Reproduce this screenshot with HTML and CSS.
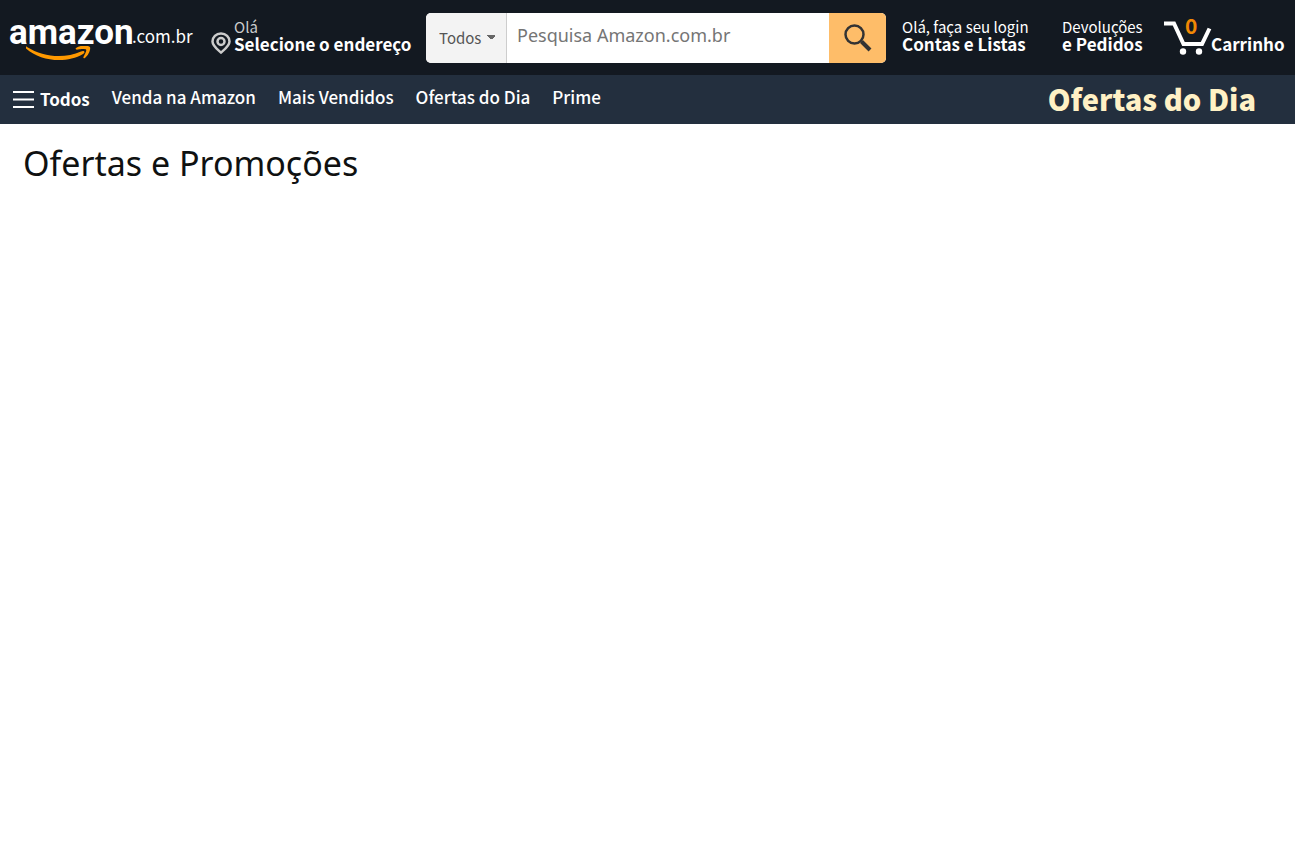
FILE: index.html
```html
<!DOCTYPE html>
<html lang="pt-BR">
<head>
<meta charset="utf-8">
<meta name="viewport" content="width=device-width, initial-scale=1">
<title>Ofertas e Promoções</title>
<link rel="stylesheet" href="styles.css">
</head>
<body>
<header>
  <div class="belt">
    <a class="logo" href="#">
      <span class="wordmark">amazon<svg class="smile" viewBox="0 0 66 16" aria-hidden="true"><path d="M1 1C17 11 38 13 55 5.500C58 4 60 6 57 8C41 17.500 15 16 0 2.500C-1 1 0 0 1 1Z"/><path d="M50 2C54-1 62-1 64 1C65 4 62 10 59 12C57 13 57 11 58 10C59 8 61 4.500 60 3.500C59 2.500 54 3 52 3.500C50 4 49 3 50 2Z"/></svg></span>
      <span class="domain">.com.br</span>
    </a>
    <a class="location" href="#">
      <svg class="pin" viewBox="0 0 20 22" aria-hidden="true"><path d="M10 1.500C5 1.500 1.500 5 1.500 9.500C1.500 14 6.500 17.500 10 20.500C13.500 17.500 18.500 14 18.500 9.500C18.500 5 15 1.500 10 1.500Z"/><circle cx="10" cy="9.500" r="3.500"/></svg>
      <span class="two-line"><span class="line-one muted">Olá</span><strong>Selecione o endereço</strong></span>
    </a>
    <form class="search">
      <select class="scope" aria-label="Departamento"><option>Todos</option></select>
      <input class="query" type="text" placeholder="Pesquisa Amazon.com.br" aria-label="Pesquisa Amazon.com.br">
      <button class="go" type="button" aria-label="Ir"><svg viewBox="0 0 28 28" aria-hidden="true"><circle cx="10.500" cy="10.500" r="9"/><path class="handle" d="M17.500 17.500L26 26"/></svg></button>
    </form>
    <a class="two-line account" href="#"><span class="line-one">Olá, faça seu login</span><strong>Contas e Listas</strong></a>
    <a class="two-line orders" href="#"><span class="line-one">Devoluções</span><strong>e Pedidos</strong></a>
    <a class="cart" href="#">
      <span class="cart-icon"><svg viewBox="0 0 48 36" aria-hidden="true"><path d="M0 4.500H10L19.500 25H38L45.500 9.500"/><circle cx="19" cy="32.500" r="3.200"/><circle cx="35" cy="32.500" r="3.200"/></svg><span class="count">0</span></span>
      <strong>Carrinho</strong>
    </a>
  </div>
  <nav class="main-nav" aria-label="Principal">
    <button class="all" type="button"><svg viewBox="0 0 21 17" aria-hidden="true"><path d="M0 1H21M0 8.500H21M0 16H21"/></svg><span>Todos</span></button>
    <a href="#">Venda na Amazon</a>
    <a href="#">Mais Vendidos</a>
    <a href="#">Ofertas do Dia</a>
    <a href="#">Prime</a>
    <a class="promo" href="#">Ofertas do Dia</a>
  </nav>
</header>
<main>
  <h1>Ofertas e Promoções</h1>
</main>
</body>
</html>
```
FILE: styles.css
```css
* { box-sizing: border-box; }
body {
  margin: 0;
  background: #fff;
  color: #0f1111;
  font-family: "Noto Sans CJK JP", "Noto Sans", sans-serif;
}
a { color: #fff; text-decoration: none; white-space: nowrap; }
svg { display: block; fill: none; }
strong { font-weight: 700; }
button, input, select { font-family: inherit; }

.belt {
  display: flex;
  align-items: center;
  height: 75px;
  padding: 0 13px 0 9px;
  background: #131921;
}
.logo { display: flex; align-items: center; width: 202px; }
.wordmark {
  position: relative;
  width: 123px;
  padding-bottom: 10px;
  font: 700 35px/40px Roboto, sans-serif;
}
.smile {
  position: absolute;
  left: 17px;
  top: 33px;
  width: 66px;
  height: 16px;
  fill: #ff9900;
}
.domain { padding-bottom: 4px; font-size: 17px; line-height: 20px; }
.location { display: flex; align-items: center; gap: 3px; width: 215px; }
.pin { width: 20px; height: 22px; margin-top: 10px; stroke: #ccc; stroke-width: 2.5; }
.two-line {
  display: flex;
  flex-direction: column;
  padding-bottom: 5px;
  font-size: 17px;
  line-height: 17px;
}
.line-one { font-size: 15px; }
.muted { color: #ccc; }

.search {
  display: flex;
  flex: 1;
  height: 50px;
  overflow: hidden;
  border-radius: 5px;
  background: #fff;
}
.scope {
  appearance: none;
  width: 81px;
  padding: 0 13px;
  border: 0;
  border-right: 1px solid #cdcdcd;
  background:
    linear-gradient(to top right, transparent 50%, #666 50%) 60px 22px / 5px 5px no-repeat,
    linear-gradient(to top left, transparent 50%, #666 50%) 65px 22px / 5px 5px no-repeat,
    #f3f3f3;
  color: #555;
  font-size: 15px;
}
.query {
  flex: 1;
  min-width: 0;
  padding: 0 10px 5px;
  border: 0;
  outline: 0;
  font-family: "Noto Sans", sans-serif;
  font-size: 18px;
}
.query::placeholder { color: #757575; }
.go {
  display: grid;
  place-items: center;
  width: 57px;
  padding: 0;
  border: 0;
  background: #febd69;
}
.go svg { width: 28px; height: 28px; stroke: #333; stroke-width: 2.5; }
.go .handle { stroke-width: 4; }

.account { width: 160px; margin-left: 16px; }
.orders { width: 102px; }
.cart { display: flex; align-items: center; }
.cart strong { width: 71px; margin-top: 12px; font-size: 17px; line-height: 17px; }
.cart-icon { position: relative; width: 47px; }
.cart-icon svg { width: 48px; height: 36px; margin-bottom: 2px; stroke: #fff; stroke-width: 4; }
.cart-icon circle { fill: #fff; stroke: none; }
.count {
  position: absolute;
  left: 21px;
  top: -4px;
  color: #f08804;
  font-size: 21px;
  font-weight: 700;
  line-height: 20px;
}

.main-nav {
  display: flex;
  align-items: center;
  gap: 22px;
  height: 49px;
  padding: 0 39px 0 13px;
  background: #232f3e;
  font-size: 17px;
  font-weight: 500;
}
.main-nav a { padding-bottom: 6px; }
.all {
  display: flex;
  align-items: center;
  gap: 6px;
  padding: 0;
  border: 0;
  background: none;
  color: #fff;
  font-size: 17px;
  font-weight: 700;
}
.all span { padding-bottom: 3px; }
.all svg { width: 21px; height: 17px; stroke: #fff; stroke-width: 2; }
.main-nav .promo {
  margin-left: auto;
  padding-bottom: 3px;
  color: #fff1c5;
  font-size: 29px;
  font-weight: 900;
  line-height: 40px;
}

h1 {
  margin: 0;
  padding: 15px 23px;
  font-family: "Noto Sans", sans-serif;
  font-size: 34px;
  font-weight: 400;
  line-height: 48px;
}
```
